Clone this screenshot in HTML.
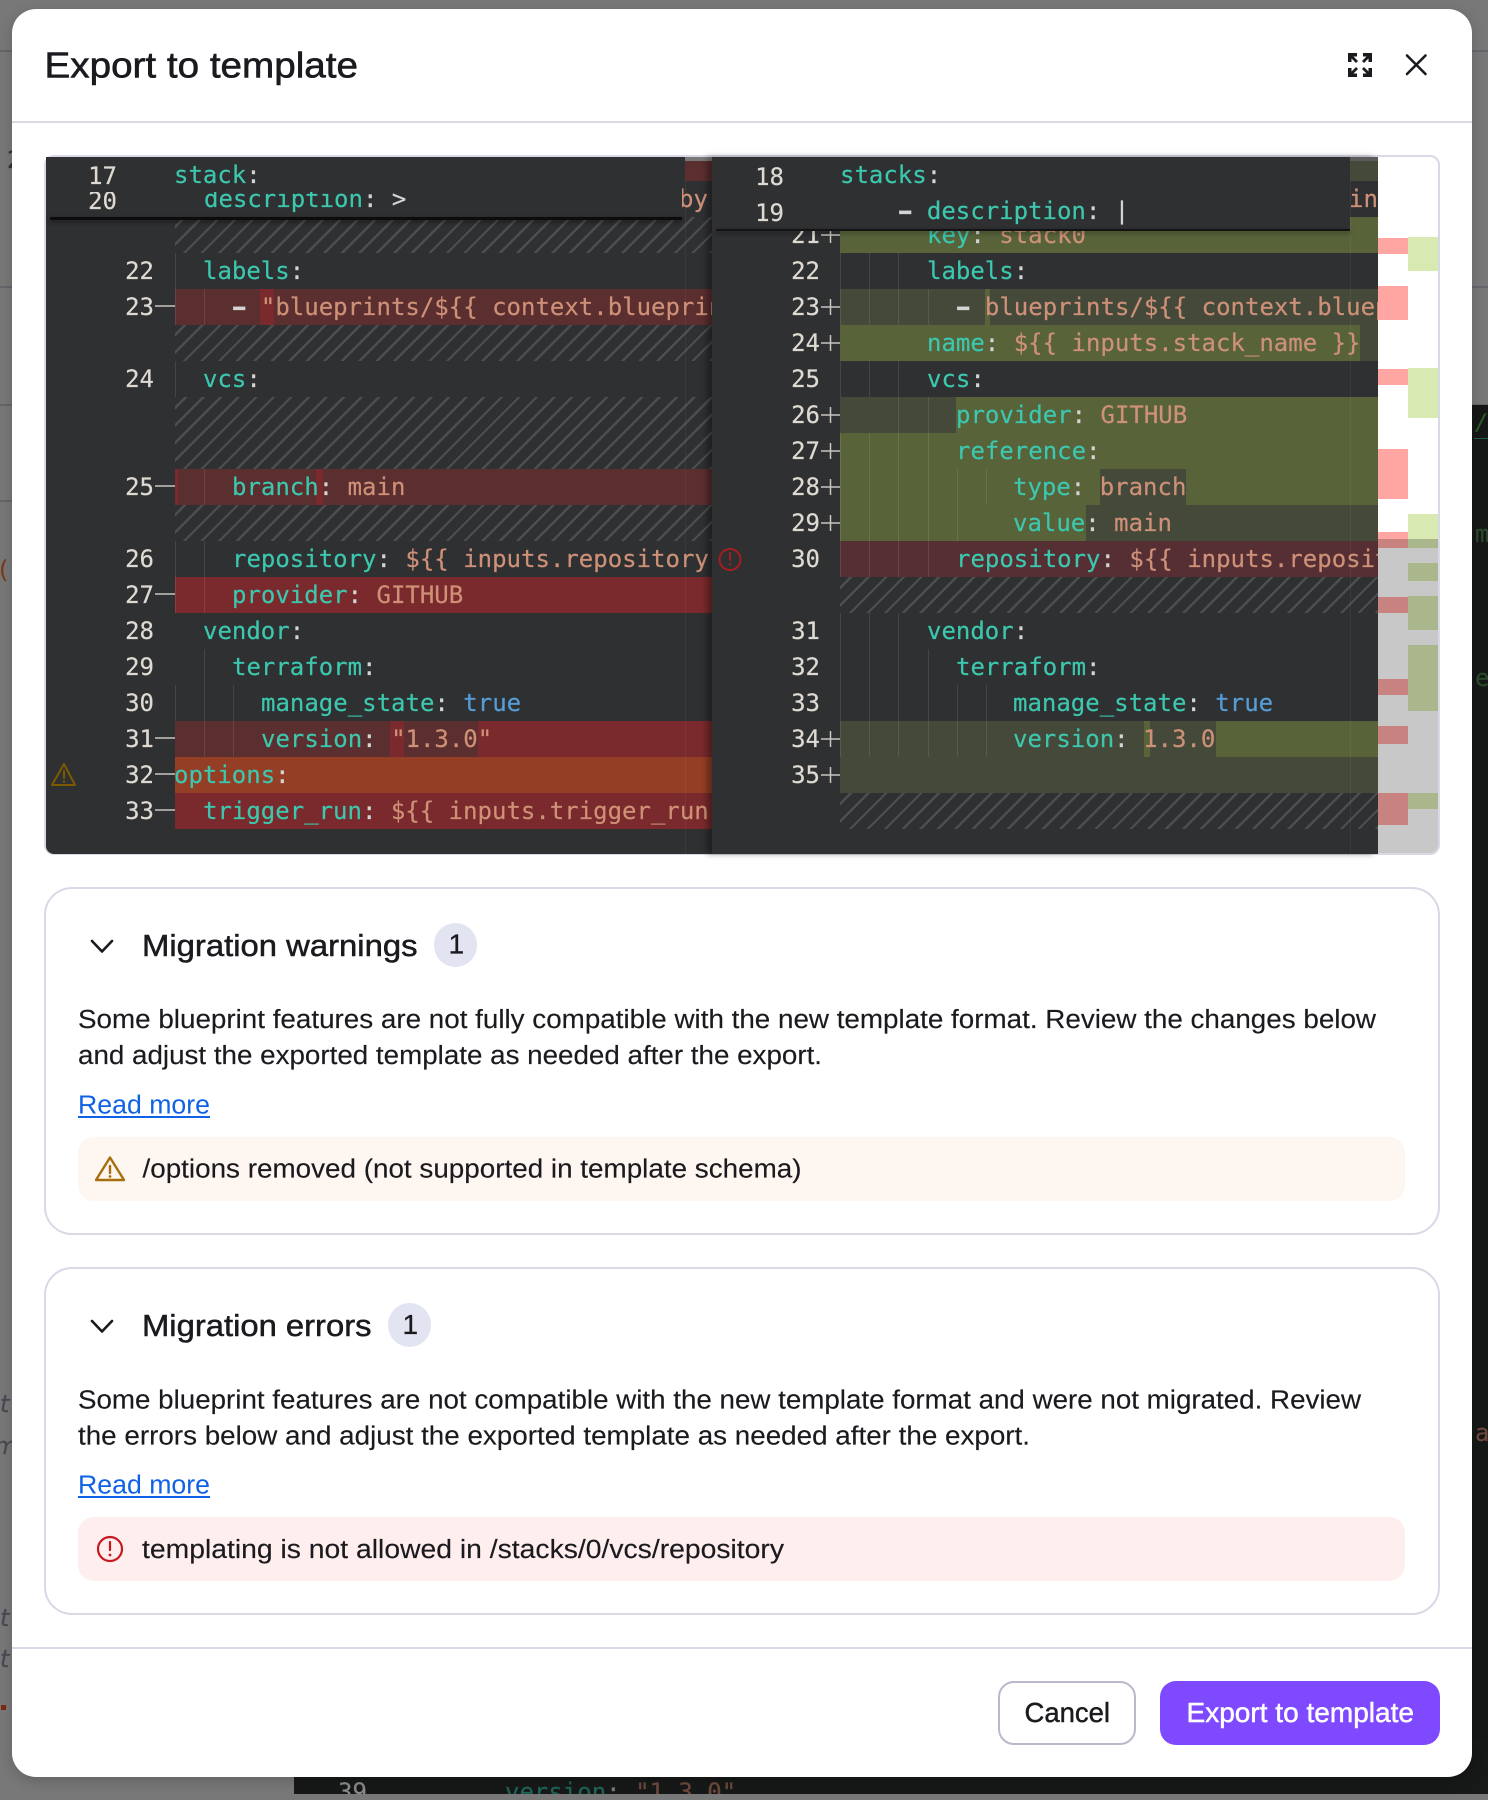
<!DOCTYPE html>
<html><head><meta charset="utf-8"><title>Export to template</title>
<style>
html,body{margin:0;padding:0;width:1488px;height:1800px;overflow:hidden;background:#7a7a7a}
#a{position:absolute;left:0;top:0;width:1488px;height:1800px;overflow:hidden}
.x{position:absolute}
.m{font-family:"DejaVu Sans Mono","Liberation Mono",monospace;font-size:24px;line-height:36px;white-space:pre;color:#d4d4d4;position:absolute;margin-top:1px;-webkit-text-stroke:.2px}
.cl .m{margin-left:-1px}
.d{display:inline-block;font-weight:bold;transform:scaleX(1.6)}
.k{color:#3cc7ae}.s{color:#ce9178}.b{color:#569cd6}
.n{color:#dedad3;width:60px;text-align:right}
.ln{left:94px}.rn{left:760px}
.c{position:absolute;left:0;top:0;width:1488px;height:1800px}
.cl{clip-path:inset(157px 776px 946px 175px)}
.cr{clip-path:inset(157px 110px 946px 840px)}
.rd{background:#5b2e2f}.rs{background:#7a2a2c}.gs{background:#58633a}.gd{background:#45493a}
.h{background:repeating-linear-gradient(-45deg,#4d4e4f 0 2.4px,transparent 2.4px 12.4px)}
.p{background:#ffa6a3;left:1378px;width:30px}
.v{background:#d9e9b2;left:1408px;width:30px}
svg{position:absolute;left:0;top:0}
</style></head><body><div id="a">
<!-- page behind -->
<div class="x" style="left:0;top:0;width:1488px;height:1800px;background:#787878"></div>
<div class="x" style="left:0;top:50px;width:1488px;height:2px;background:#66666c"></div>
<div class="x" style="left:0;top:286px;width:1488px;height:2px;background:#66666c"></div>
<div class="x" style="left:0;top:404px;width:1488px;height:2px;background:#66666c"></div>
<div class="x" style="left:0;top:500px;width:12px;height:2px;background:#66666c"></div>
<div class="x" style="left:1472px;top:405px;width:16px;height:1389px;background:#161717;overflow:hidden">
<div class="m" style="left:3px;top:0;color:#2d5a2d;font-size:22px;font-style:italic">/</div>
<div class="x" style="left:2px;top:33px;width:14px;height:1px;background:#1f5d4f"></div>
<div class="m" style="left:3px;top:110px;color:#2c4a2c">m</div>
<div class="m" style="left:3px;top:254px;color:#2c4a2c">e</div>
<div class="m" style="left:3px;top:1009px;color:#6d4a3d">a</div>
</div>
<div class="x" style="left:294px;top:1740px;width:1194px;height:54px;background:#171818;overflow:hidden">
<div class="m" style="left:44px;top:33px;color:#8b8b8b">39</div>
<div class="m" style="left:211px;top:33px"><span style="color:#1f6357">version</span><span style="color:#7a7a7a">: </span><span style="color:#6d4a3d">"1.3.0"</span></div>
</div>
<div class="m" style="left:0;top:1385px;color:#4a4a55;font-family:'DejaVu Sans';font-style:italic">t</div>
<div class="m" style="left:-6px;top:1427px;color:#4a4a55;font-family:'DejaVu Sans';font-style:italic">m</div>
<div class="m" style="left:0;top:1599px;color:#4a4a55;font-family:'DejaVu Sans';font-style:italic">t</div>
<div class="m" style="left:0;top:1640px;color:#4a4a55;font-family:'DejaVu Sans';font-style:italic">t</div>
<div class="x" style="left:1px;top:1705px;width:5px;height:5px;background:#7a2a10"></div>
<div class="m" style="left:7px;top:141px;color:#333">2</div>
<div class="m" style="left:-4px;top:551px;color:#7a3a20">(</div>
<!-- modal -->
<div class="x" style="left:12px;top:9px;width:1460px;height:1768px;background:#fff;border-radius:24px;box-shadow:0 4px 14px rgba(0,0,0,.18)"></div>
<div class="x" style="left:12px;top:121px;width:1460px;height:2px;background:#d8d8e6"></div>
<div class="x" style="left:12px;top:1647px;width:1460px;height:2px;background:#d8d8e6"></div>
<!-- editor -->
<div class="x" style="left:44px;top:155px;width:1396px;height:700px;box-sizing:border-box;border:2px solid #d8d8e6;border-radius:10px;background:#fff"></div>
<div class="x" style="left:46px;top:157px;width:1332px;height:697px;background:#2f3032;border-radius:8px 0 0 8px"></div>
<!-- left rows -->
<div class="c cl">
<div class="x h" style="left:175px;top:217px;width:537px;height:36px"></div>
<div class="x rd" style="left:175px;top:289px;width:537px;height:36px"></div>
<div class="x rs" style="left:260px;top:289px;width:14px;height:36px"></div>
<div class="x h" style="left:175px;top:325px;width:537px;height:36px"></div>
<div class="x h" style="left:175px;top:397px;width:537px;height:72px"></div>
<div class="x rd" style="left:175px;top:469px;width:537px;height:36px"></div>
<div class="x rs" style="left:175px;top:469px;width:3px;height:36px"></div>
<div class="x rs" style="left:316px;top:469px;width:7px;height:36px"></div>
<div class="x h" style="left:175px;top:505px;width:537px;height:36px"></div>
<div class="x rs" style="left:175px;top:577px;width:537px;height:36px"></div>
<div class="x rd" style="left:175px;top:721px;width:215px;height:36px"></div>
<div class="x rs" style="left:390px;top:721px;width:14px;height:36px"></div>
<div class="x rd" style="left:404px;top:721px;width:74px;height:36px"></div>
<div class="x rs" style="left:478px;top:721px;width:234px;height:36px"></div>
<div class="x" style="left:175px;top:757px;width:537px;height:36px;background:#943f25"></div>
<div class="x rs" style="left:175px;top:793px;width:537px;height:36px"></div>
<div class="x rd" style="left:685px;top:161px;width:27px;height:20px"></div>
<div class="x" style="left:685px;top:157px;width:27px;height:4px;background:#7a7a7a"></div>
<svg width="1488" height="1800" fill="none" stroke="rgba(255,255,255,.1)" stroke-width="1"><path d="M175.5 253V289M175.5 289V325M204.5 289V325M175.5 361V397M204.5 469V505M175.5 541V613M204.5 541V613M204.5 649V757M233.5 685V757M175.5 685V721"/><path stroke="rgba(255,255,255,.05)" d="M685.5 181V854"/></svg>
<div class="m s" style="left:680px;top:180px">by</div>
<div class="m" style="left:204px;top:252px"><span class="k">labels</span>:</div>
<div class="m" style="left:233px;top:288px"><span class="d">-</span> <span class="s">"blueprints/${{ context.blueprint.name }}"</span></div>
<div class="m" style="left:204px;top:360px"><span class="k">vcs</span>:</div>
<div class="m" style="left:233px;top:468px"><span class="k">branch</span>: <span class="s">main</span></div>
<div class="m" style="left:233px;top:540px"><span class="k">repository</span>: <span class="s">${{ inputs.repository }}</span></div>
<div class="m" style="left:233px;top:576px"><span class="k">provider</span>: <span class="s">GITHUB</span></div>
<div class="m" style="left:204px;top:612px"><span class="k">vendor</span>:</div>
<div class="m" style="left:233px;top:648px"><span class="k">terraform</span>:</div>
<div class="m" style="left:262px;top:684px"><span class="k">manage_state</span>: <span class="b">true</span></div>
<div class="m" style="left:262px;top:720px"><span class="k">version</span>: <span class="s">"1.3.0"</span></div>
<div class="m" style="left:175px;top:756px"><span class="k">options</span>:</div>
<div class="m" style="left:204px;top:792px"><span class="k">trigger_run</span>: <span class="s">${{ inputs.trigger_run }}</span></div>
</div>
<!-- left numbers -->
<div class="m n ln" style="top:252px">22</div>
<div class="m n ln" style="top:288px">23</div>
<div class="m n ln" style="top:360px">24</div>
<div class="m n ln" style="top:468px">25</div>
<div class="m n ln" style="top:540px">26</div>
<div class="m n ln" style="top:576px">27</div>
<div class="m n ln" style="top:612px">28</div>
<div class="m n ln" style="top:648px">29</div>
<div class="m n ln" style="top:684px">30</div>
<div class="m n ln" style="top:720px">31</div>
<div class="m n ln" style="top:756px">32</div>
<div class="m n ln" style="top:792px">33</div>
<svg width="1488" height="1800" fill="none" stroke="#c9c6c0" stroke-width="1.5"><path d="M155 306H175M155 486H175M155 594H175M155 738H175M155 774H175M155 810H175"/></svg>
<!-- left sticky -->
<div class="x" style="left:46px;top:157px;width:636px;height:60px;background:#2f3032;overflow:hidden">
<div class="m n" style="left:11px;top:0;color:#dedad3">17</div>
<div class="m" style="left:128px;top:-1px"><span class="k">stack</span>:</div>
<div class="x" style="left:0;top:35px;width:636px;height:25px;overflow:hidden"><div class="m n" style="left:11px;top:-10px">20</div><div class="m" style="left:158px;top:-12px"><span class="k">description</span>: &gt;</div></div>
</div>
<div class="x" style="left:50px;top:217px;width:632px;height:3px;background:#0c0c0c;box-shadow:0 2px 5px rgba(0,0,0,.5)"></div>
<!-- right pane -->
<div class="x" style="left:712px;top:157px;width:666px;height:697px;background:#2f3032;box-shadow:-5px 0 6px rgba(0,0,0,.35)"></div>
<div class="c cr">
<div class="x gd" style="left:1350px;top:161px;width:28px;height:20px"></div>
<div class="x" style="left:1350px;top:157px;width:28px;height:4px;background:#5c5c5c"></div>
<div class="x gs" style="left:840px;top:217px;width:538px;height:36px"></div>
<div class="x gd" style="left:840px;top:289px;width:538px;height:36px"></div>
<div class="x gs" style="left:985px;top:289px;width:5px;height:36px"></div>
<div class="x gs" style="left:840px;top:325px;width:520px;height:36px"></div>
<div class="x gd" style="left:1360px;top:325px;width:18px;height:36px"></div>
<div class="x gd" style="left:840px;top:397px;width:116px;height:36px"></div>
<div class="x gs" style="left:956px;top:397px;width:422px;height:36px"></div>
<div class="x gs" style="left:840px;top:433px;width:538px;height:36px"></div>
<div class="x gs" style="left:840px;top:469px;width:538px;height:36px"></div>
<div class="x gd" style="left:1100px;top:469px;width:86px;height:36px"></div>
<div class="x gs" style="left:840px;top:505px;width:246px;height:36px"></div>
<div class="x gd" style="left:1086px;top:505px;width:292px;height:36px"></div>
<div class="x" style="left:840px;top:541px;width:538px;height:36px;background:#552f33"></div>
<div class="x h" style="left:840px;top:577px;width:538px;height:36px"></div>
<div class="x gd" style="left:840px;top:721px;width:538px;height:36px"></div>
<div class="x gs" style="left:1144px;top:721px;width:6px;height:36px"></div>
<div class="x gs" style="left:1216px;top:721px;width:162px;height:36px"></div>
<div class="x gd" style="left:840px;top:757px;width:538px;height:36px"></div>
<div class="x h" style="left:840px;top:793px;width:538px;height:36px"></div>
<svg width="1488" height="1800" fill="none" stroke="rgba(255,255,255,.1)" stroke-width="1"><path d="M840.5 253V325M869.5 253V325M898.5 253V325M928.5 289V325M840.5 361V397M869.5 361V397M898.5 361V397M840.5 433V541M869.5 433V541M898.5 397V541M928.5 397V541M957.5 469V541M986.5 469V505M840.5 541V577M869.5 541V577M898.5 541V577M928.5 541V577M840.5 613V757M869.5 613V757M898.5 613V757M928.5 649V757M957.5 685V757M986.5 685V757"/><path stroke="rgba(255,255,255,.05)" d="M1350.5 181V854"/></svg>
<div class="m s" style="left:1349px;top:180px">inf</div>
<div class="m" style="left:927px;top:216px"><span class="k">key</span>: <span class="s">stack0</span></div>
<div class="m" style="left:927px;top:252px"><span class="k">labels</span>:</div>
<div class="m" style="left:956px;top:288px"><span class="d">-</span> <span class="s">blueprints/${{ context.blueprint.name }}</span></div>
<div class="m" style="left:927px;top:324px"><span class="k">name</span>: <span class="s">${{ inputs.stack_name }}</span></div>
<div class="m" style="left:927px;top:360px"><span class="k">vcs</span>:</div>
<div class="m" style="left:956px;top:396px"><span class="k">provider</span>: <span class="s">GITHUB</span></div>
<div class="m" style="left:956px;top:432px"><span class="k">reference</span>:</div>
<div class="m" style="left:1013px;top:468px"><span class="k">type</span>: <span class="s">branch</span></div>
<div class="m" style="left:1013px;top:504px"><span class="k">value</span>: <span class="s">main</span></div>
<div class="m" style="left:956px;top:540px"><span class="k">repository</span>: <span class="s">${{ inputs.repository }}</span></div>
<div class="m" style="left:927px;top:612px"><span class="k">vendor</span>:</div>
<div class="m" style="left:956px;top:648px"><span class="k">terraform</span>:</div>
<div class="m" style="left:1013px;top:684px"><span class="k">manage_state</span>: <span class="b">true</span></div>
<div class="m" style="left:1013px;top:720px"><span class="k">version</span>: <span class="s">1.3.0</span></div>
</div>
<!-- right numbers -->
<div class="m n rn" style="top:216px">21</div>
<div class="m n rn" style="top:252px">22</div>
<div class="m n rn" style="top:288px">23</div>
<div class="m n rn" style="top:324px">24</div>
<div class="m n rn" style="top:360px">25</div>
<div class="m n rn" style="top:396px">26</div>
<div class="m n rn" style="top:432px">27</div>
<div class="m n rn" style="top:468px">28</div>
<div class="m n rn" style="top:504px">29</div>
<div class="m n rn" style="top:540px">30</div>
<div class="m n rn" style="top:612px">31</div>
<div class="m n rn" style="top:648px">32</div>
<div class="m n rn" style="top:684px">33</div>
<div class="m n rn" style="top:720px">34</div>
<div class="m n rn" style="top:756px">35</div>
<svg width="1488" height="1800" fill="none" stroke="#c9c6c0" stroke-width="1.5"><path d="M821 235H840M830.5 227V243M821 307H840M830.5 299V315M821 343H840M830.5 335V351M821 415H840M830.5 407V423M821 451H840M830.5 443V459M821 487H840M830.5 479V495M821 523H840M830.5 515V531M821 739H840M830.5 731V747M821 775H840M830.5 767V783"/></svg>
<!-- right sticky -->
<div class="x" style="left:712px;top:157px;width:638px;height:72px;background:#2f3032">
<div class="m n" style="left:12px;top:1px">18</div>
<div class="m" style="left:128px;top:-1px"><span class="k">stacks</span>:</div>
<div class="m n" style="left:12px;top:37px">19</div>
<div class="m" style="left:186px;top:35px"><span class="d">-</span> <span class="k">description</span>: |</div>
</div>
<div class="x" style="left:716px;top:229px;width:634px;height:2px;background:#141414;box-shadow:0 2px 5px rgba(0,0,0,.5)"></div>
<!-- overview -->
<div class="x p" style="top:238px;height:16px"></div>
<div class="x v" style="top:237px;height:34px"></div>
<div class="x p" style="top:286px;height:34px"></div>
<div class="x p" style="top:369px;height:16px"></div>
<div class="x v" style="top:368px;height:50px"></div>
<div class="x p" style="top:449px;height:50px"></div>
<div class="x v" style="top:514px;height:25px"></div>
<div class="x p" style="top:532px;height:16px"></div>
<div class="x v" style="top:539px;height:9px"></div>
<div class="x v" style="top:563px;height:18px"></div>
<div class="x p" style="top:597px;height:16px"></div>
<div class="x v" style="top:596px;height:34px"></div>
<div class="x v" style="top:645px;height:66px"></div>
<div class="x p" style="top:679px;height:16px"></div>
<div class="x p" style="top:726px;height:18px"></div>
<div class="x p" style="top:793px;height:32px"></div>
<div class="x v" style="top:793px;height:16px"></div>
<div class="x" style="left:1378px;top:539px;width:60px;height:314px;background:rgba(0,0,0,.215);border-radius:0 0 8px 0"></div>
<!-- accordions -->
<div class="x" style="left:44px;top:887px;width:1396px;height:348px;box-sizing:border-box;border:2px solid #d8d8e6;border-radius:28px"></div>
<div class="x" style="left:44px;top:1267px;width:1396px;height:348px;box-sizing:border-box;border:2px solid #d8d8e6;border-radius:28px"></div>
<div class="x" style="left:434px;top:923px;width:43px;height:44px;border-radius:22px;background:#e3e4f2"></div>
<div class="x" style="left:388px;top:1303px;width:43px;height:44px;border-radius:22px;background:#e3e4f2"></div>
<div class="x" style="left:78px;top:1137px;width:1327px;height:64px;border-radius:16px;background:#fef6f1"></div>
<div class="x" style="left:78px;top:1517px;width:1327px;height:64px;border-radius:16px;background:#ffeeee"></div>
<div class="x" style="left:998px;top:1681px;width:138px;height:64px;box-sizing:border-box;border:2px solid #b9b9cc;border-radius:16px;background:#fff"></div>
<div class="x" style="left:1160px;top:1681px;width:280px;height:64px;border-radius:16px;background:#7f4aff"></div>
<div class="x" style="left:78px;top:1116px;width:132px;height:2px;background:#0f62e6"></div>
<div class="x" style="left:78px;top:1496px;width:132px;height:2px;background:#0f62e6"></div>
<!-- text + icons -->
<svg width="1488" height="1800" font-family="'Liberation Sans',sans-serif" fill="#1a1a1f">
<g font-size="36" stroke="#1a1a1f" stroke-width=".6"><text x="44.500" y="77.500" textLength="313.500" lengthAdjust="spacingAndGlyphs">Export to template</text></g>
<g font-size="30.500" stroke="#1a1a1f" stroke-width=".5">
<text x="142" y="956" textLength="275.500" lengthAdjust="spacingAndGlyphs">Migration warnings</text>
<text x="142" y="1336" textLength="229.500" lengthAdjust="spacingAndGlyphs">Migration errors</text>
</g>
<g font-size="28" stroke="#1a1a1f" stroke-width=".3"><text x="448.500" y="953.500">1</text><text x="402.500" y="1334">1</text></g>
<g font-size="25.500" stroke="#1a1a1f" stroke-width=".15">
<text x="78" y="1028" textLength="1298" lengthAdjust="spacingAndGlyphs">Some blueprint features are not fully compatible with the new template format. Review the changes below</text>
<text x="78" y="1064" textLength="744" lengthAdjust="spacingAndGlyphs">and adjust the exported template as needed after the export.</text>
<text x="78" y="1113.500" textLength="132" lengthAdjust="spacingAndGlyphs" fill="#0f62e6" stroke="none">Read more</text>
<text x="142.500" y="1177.500" textLength="659" lengthAdjust="spacingAndGlyphs">/options removed (not supported in template schema)</text>
<text x="78" y="1408.500" textLength="1283" lengthAdjust="spacingAndGlyphs">Some blueprint features are not compatible with the new template format and were not migrated. Review</text>
<text x="78" y="1444.500" textLength="952" lengthAdjust="spacingAndGlyphs">the errors below and adjust the exported template as needed after the export.</text>
<text x="78" y="1493.500" textLength="132" lengthAdjust="spacingAndGlyphs" fill="#0f62e6" stroke="none">Read more</text>
<text x="142" y="1558" textLength="642" lengthAdjust="spacingAndGlyphs">templating is not allowed in /stacks/0/vcs/repository</text>
</g>
<g font-size="27.500" stroke-width=".45">
<text x="1024.500" y="1722" textLength="85.500" lengthAdjust="spacingAndGlyphs" stroke="#1a1a1f">Cancel</text>
<text x="1186.500" y="1722" textLength="227.500" lengthAdjust="spacingAndGlyphs" fill="#fff" stroke="#fff">Export to template</text>
</g>
<g fill="none" stroke="#1a1a1f" stroke-width="2.600" stroke-linecap="round" stroke-linejoin="round">
<path d="M92 941L102 951.500L112 941M92 1321L102 1331.500L112 1321"/>
<path d="M1407 55.500L1425.500 74M1425.500 55.500L1407 74"/>
</g>
<g fill="#1a1a1f"><path d="M1348 53h9v3.500h-5.500v5.500h-3.500zM1372 53h-9v3.500h5.500v5.500h3.500zM1348 77h9v-3.500h-5.500v-5.500h-3.500zM1372 77h-9v-3.500h5.500v-5.500h3.500z"/></g>
<g fill="none" stroke="#1a1a1f" stroke-width="2.800"><path d="M1350.500 55.500L1357 62M1369.500 55.500L1363 62M1350.500 74.500L1357 68M1369.500 74.500L1363 68"/></g>
<g fill="none" stroke="#a66f0b" stroke-width="2.400" stroke-linejoin="round" stroke-linecap="round"><path d="M110 1157.500L124 1180H96Z"/><path d="M110 1166V1173"/></g><circle cx="110" cy="1176.500" r="1.400" fill="#a66f0b"/>
<g fill="none" stroke="#c8181f" stroke-width="2.200" stroke-linecap="round"><circle cx="110" cy="1549" r="12"/><path d="M110 1542V1550"/></g><circle cx="110" cy="1555" r="1.400" fill="#c8181f"/>
<g fill="none" stroke="#7d5a00" stroke-width="2" stroke-linejoin="round" stroke-linecap="round"><path d="M64 764L75 785H52Z"/><path d="M64 771V778"/></g><circle cx="64" cy="781.500" r="1.200" fill="#7d5a00"/>
<g fill="none" stroke="#a71d1f" stroke-width="2" stroke-linecap="round"><circle cx="730" cy="559.500" r="10.500"/><path d="M730 553V560"/></g><circle cx="730" cy="564.500" r="1.200" fill="#a71d1f"/>
</svg>
</div></body></html>
